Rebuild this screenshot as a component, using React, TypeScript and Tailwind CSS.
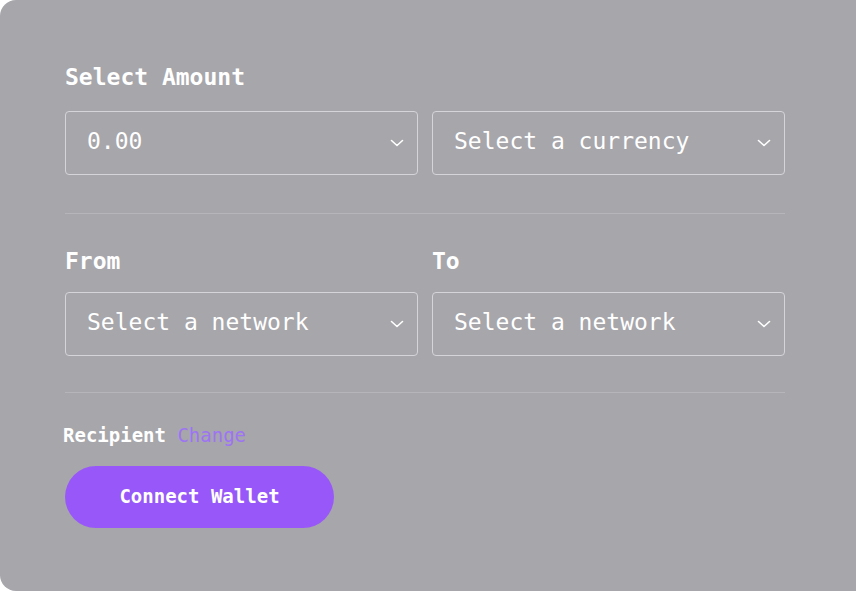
import React from "react";

const Chevron = () => (
  <svg width="14" height="8" viewBox="0 0 14 8" fill="none" className="shrink-0">
    <polyline points="1.5,1.5 7,6.5 12.5,1.5" stroke="white" strokeWidth="1.6" strokeLinecap="round" strokeLinejoin="round" />
  </svg>
);

const Field = ({ text }: { text: string }) => (
  <div className="flex-1 h-[64px] border border-[#d5d4d8] rounded-[4px] flex items-center justify-between pl-[21px] pr-[13px]">
    <span className="text-[23px] text-white leading-none -mt-[3px]">{text}</span>
    <Chevron />
  </div>
);

export default function App() {
  return (
    <div className="w-[856px] h-[591px] bg-white overflow-hidden" style={{ fontFamily: '"DejaVu Sans Mono", "Liberation Mono", monospace' }}>
      <div className="h-full bg-[#a7a6ab] rounded-l-[16px] pl-[65px] pr-[71px] pt-[64px] flex flex-col">
        <div className="text-[23px] leading-[26px] font-bold text-white">Select Amount</div>
        <div className="flex gap-[14px] mt-[21px]">
          <Field text="0.00" />
          <Field text="Select a currency" />
        </div>
        <div className="h-px bg-[#b6b5ba] mt-[38px]" />
        <div className="flex gap-[14px] mt-[34px]">
          <div className="flex-1 text-[23px] leading-[26px] font-bold text-white">From</div>
          <div className="flex-1 text-[23px] leading-[26px] font-bold text-white">To</div>
        </div>
        <div className="flex gap-[14px] mt-[18px]">
          <Field text="Select a network" />
          <Field text="Select a network" />
        </div>
        <div className="h-px bg-[#b6b5ba] mt-[36px]" />
        <div className="mt-[31px] text-[19px] leading-[22px] -ml-[2px]">
          <span className="font-bold text-white">Recipient</span>{" "}
          <span className="text-[#9d74f4]">Change</span>
        </div>
        <button className="mt-[20px] w-[269px] h-[62px] rounded-full bg-[#9858f9] text-white font-bold text-[19px] leading-none flex items-center justify-center pb-[2px]">
          Connect Wallet
        </button>
      </div>
    </div>
  );
}
